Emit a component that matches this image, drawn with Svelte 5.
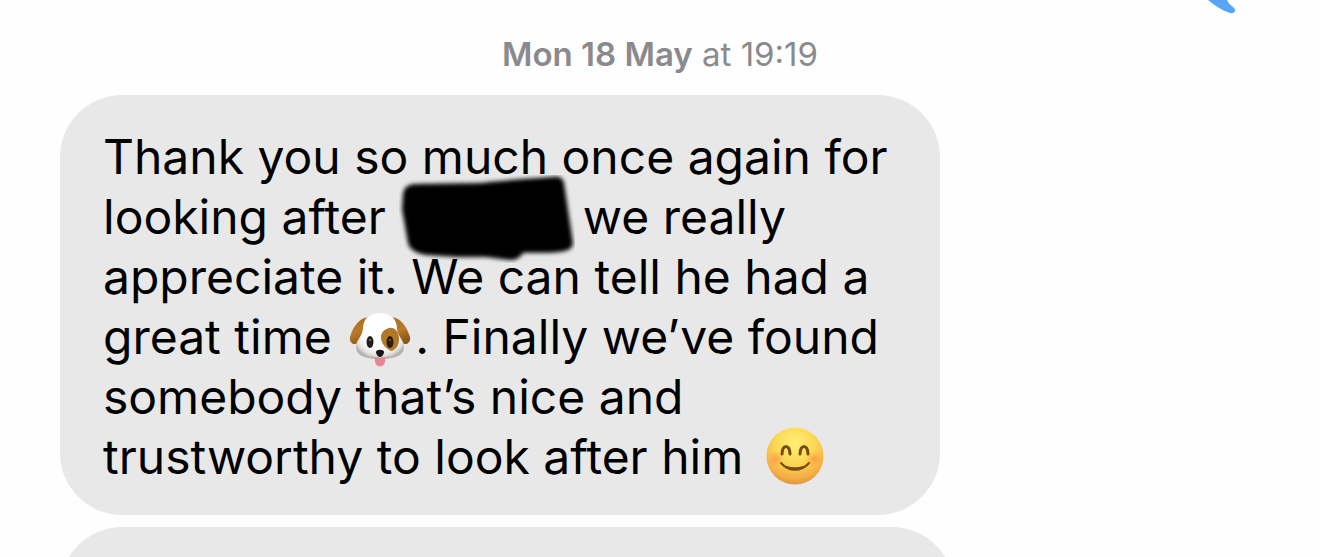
<script lang="ts">
  interface Stamp {
    day: string
    time: string
  }

  const stamp: Stamp = { day: 'Mon 18 May', time: 'at 19:19' }
</script>

<main class="thread">
  <div class="outgoing">
    <svg class="tail" viewBox="0 0 29 14" aria-hidden="true">
      <path d="M1 0H20C21 3 25 6 27 8C30 11 27 14 23 13C14 10 7 5 1 0Z" fill="#57a6f5" />
    </svg>
  </div>

  <p class="stamp"><strong>{stamp.day}</strong> {stamp.time}</p>

  <article class="bubble">
    <span class="line">Thank you so much once again for</span>
    <span class="line">
      looking after
      <span class="redacted">
        <svg viewBox="0 0 176 88" aria-hidden="true">
          <defs>
            <filter id="marker-edge" x="-10%" y="-10%" width="120%" height="120%">
              <feGaussianBlur stdDeviation="2" />
            </filter>
          </defs>
          <path
            filter="url(#marker-edge)"
            d="M4 19Q5 10 15 9L82 8C104 5 130 4 153 2Q163 0 165 8L168 28L174 68Q174 74 166 76C150 79 138 77 124 78Q119 86 110 85L87 82L58 82L27 80Q11 77 9 68L3 34Z"
          />
        </svg>
      </span>
      we really
    </span>
    <span class="line">appreciate it. We can tell he had a</span>
    <span class="line">
      great time
      <svg class="emoji dog" viewBox="0 0 62 58" role="img" aria-label="Dog face">
        <defs>
          <radialGradient id="fur" cx="0.5" cy="0.4" r="0.62">
            <stop offset="0.6" stop-color="#fff" />
            <stop offset="0.85" stop-color="#e4e2e0" />
            <stop offset="1" stop-color="#b3aeaa" />
          </radialGradient>
          <linearGradient id="ear" x1="0" y1="0" x2="0.4" y2="1">
            <stop offset="0" stop-color="#a5681c" />
            <stop offset="0.6" stop-color="#b97a29" />
            <stop offset="1" stop-color="#8e5716" />
          </linearGradient>
        </defs>
        <path d="M22 5C9 5 4 16 1 25C0 30 4 34 9 31C14 28 17 16 22 5Z" fill="url(#ear)" />
        <path d="M40 5C53 5 58 16 61 25C62 30 58 34 53 31C48 28 45 16 40 5Z" fill="url(#ear)" />
        <path
          d="M31 1C20 1 14 7 14 17C13 25 7 28 7 35C7 43 15 47 31 47C47 47 55 43 55 35C55 28 49 25 48 17C48 7 42 1 31 1Z"
          fill="url(#fur)"
        />
        <path d="M40 16C46 15 50 20 50 27C50 33 47 38 42 39C36 36 32 31 32 25C32 20 36 17 40 16Z" fill="#b37728" />
        <ellipse cx="21" cy="30" rx="3.500" ry="6" fill="#211d1b" />
        <ellipse cx="41" cy="30" rx="3.500" ry="6" fill="#2b1a0d" />
        <circle cx="21" cy="28" r="1" fill="#8d8884" />
        <circle cx="41" cy="28" r="1" fill="#8b6941" />
        <path d="M26 46H36V49C36 56 26 56 26 49Z" fill="#ed8492" />
        <path d="M22 45C27 47 31 46 31 42C31 46 35 47 40 45" fill="none" stroke="#a6a09b" />
        <path d="M27 40C27 37 35 37 35 40C35 43 32 45 31 45C30 45 27 43 27 40Z" fill="#171515" />
      </svg>. Finally we’ve found
    </span>
    <span class="line">somebody that’s nice and</span>
    <span class="line">
      trustworthy to look after him
      <svg class="emoji smile" viewBox="0 0 58 58" role="img" aria-label="Smiling face with smiling eyes">
        <defs>
          <radialGradient id="face" cx="0.5" cy="0.28" r="0.72">
            <stop offset="0" stop-color="#fff173" />
            <stop offset="0.5" stop-color="#fcd654" />
            <stop offset="0.85" stop-color="#f4ae45" />
            <stop offset="1" stop-color="#e0963c" />
          </radialGradient>
          <radialGradient id="blush">
            <stop offset="0" stop-color="#ff7438" stop-opacity="0.5" />
            <stop offset="1" stop-color="#ff8c3c" stop-opacity="0" />
          </radialGradient>
        </defs>
        <circle cx="29" cy="29" r="28.500" fill="url(#face)" />
        <ellipse cx="10" cy="32" rx="9" ry="8" fill="url(#blush)" />
        <ellipse cx="48" cy="32" rx="9" ry="8" fill="url(#blush)" />
        <path
          d="M16 27C16 17 24 17 24 27M34 27C34 17 42 17 42 27"
          fill="none"
          stroke="#754b16"
          stroke-width="3"
          stroke-linecap="round"
        />
        <path
          d="M15 36C23 45 35 45 43 36C38 43 20 43 15 36Z"
          fill="#754b16"
          stroke="#754b16"
          stroke-width="2"
          stroke-linejoin="round"
        />
      </svg>
    </span>
  </article>

  <article class="bubble next"></article>
</main>

<style>
  :global(body) {
    background: #fefefe;
  }

  .thread {
    display: flex;
    flex-direction: column;
    box-sizing: border-box;
    height: 100vh;
    overflow: hidden;
    padding: 0 60px;
    font-family: Inter, 'Liberation Sans', sans-serif;
    color: #000;
  }

  .outgoing {
    display: flex;
    flex: none;
    justify-content: flex-end;
    padding-right: 24px;
  }

  .tail {
    width: 29px;
    height: 14px;
  }

  .stamp {
    margin: 20px 0 21px;
    font-size: 33px;
    line-height: 40px;
    text-align: center;
    color: #8a8a8e;
  }

  .stamp strong {
    font-weight: 600;
  }

  .bubble {
    flex: none;
    box-sizing: border-box;
    width: 880px;
    max-width: 100%;
    padding: 32px 43px 28px;
    border-radius: 62px;
    background: #e8e8e8;
    font-size: 48px;
    line-height: 60px;
  }

  .line {
    display: block;
    height: 60px;
    white-space: nowrap;
  }

  .redacted {
    position: relative;
    display: inline-block;
    width: 170px;
    height: 32px;
  }

  .redacted svg {
    position: absolute;
    top: -27px;
    left: 0;
    width: 176px;
    height: 88px;
  }

  .emoji {
    display: inline-block;
  }

  .dog {
    width: 62px;
    height: 58px;
    margin: 0 4px;
    vertical-align: -16px;
  }

  .smile {
    width: 58px;
    height: 58px;
    margin-left: 9px;
    vertical-align: -11px;
  }

  .next {
    width: 894px;
    height: 124px;
    margin-top: 12px;
  }
</style>
